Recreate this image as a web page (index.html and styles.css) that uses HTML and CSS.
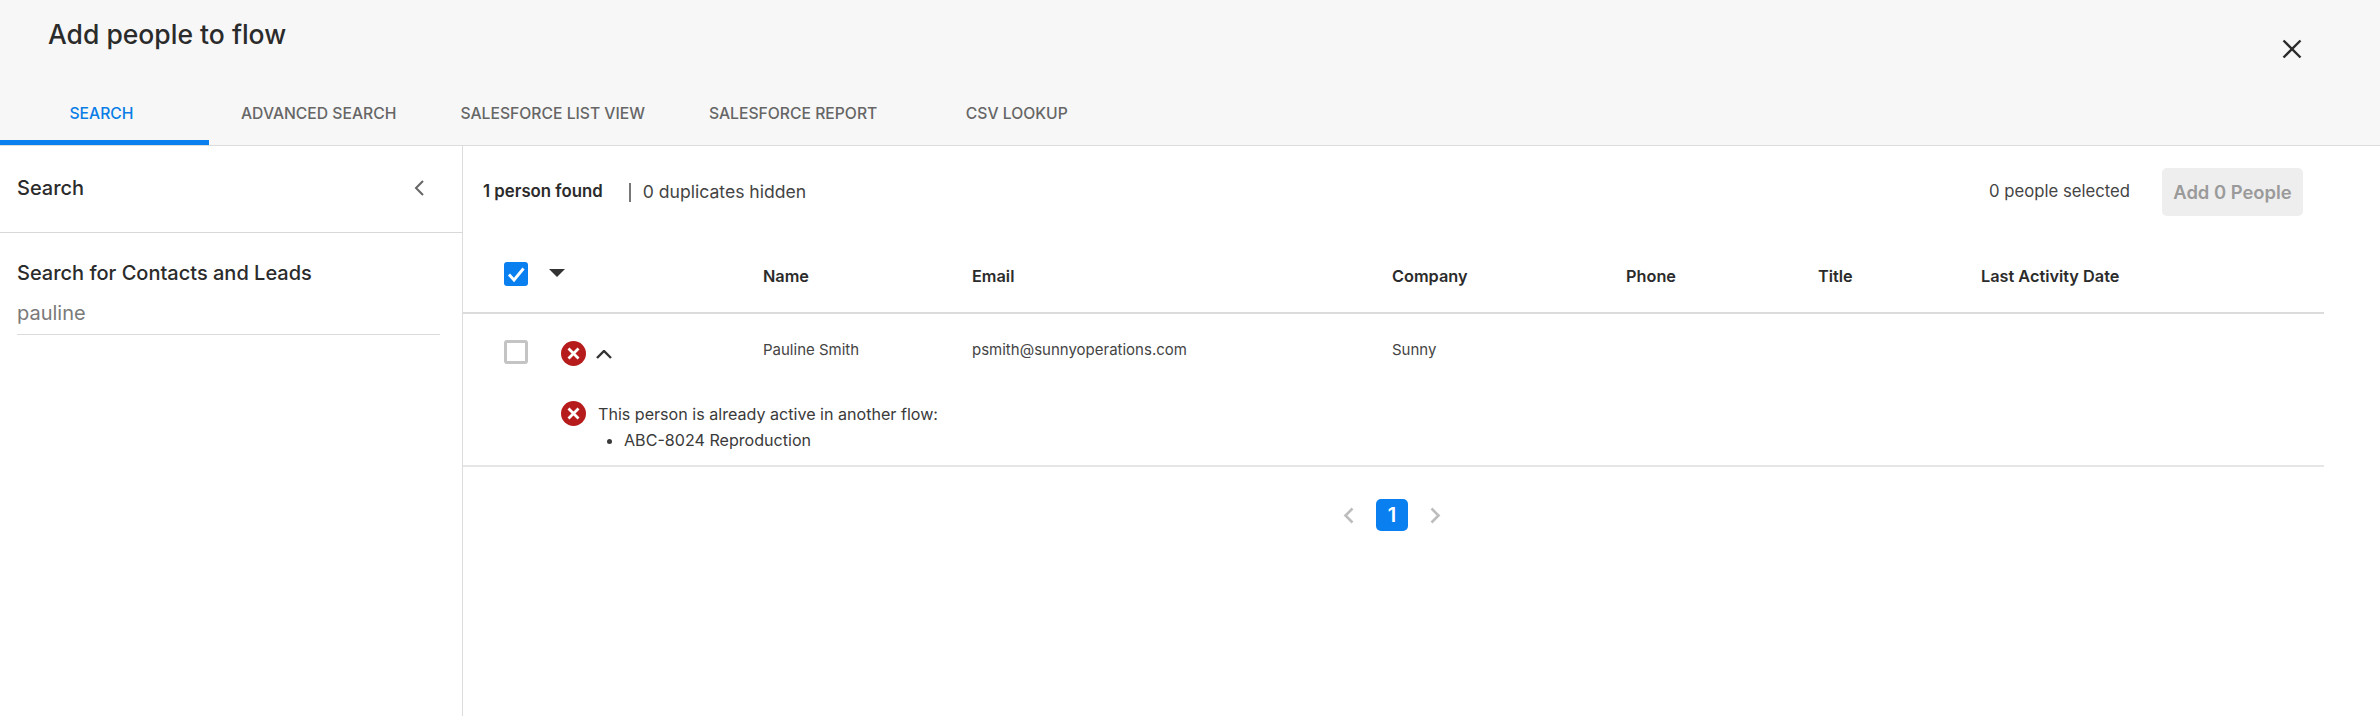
FILE: index.html
```html
<!DOCTYPE html>
<html lang="en">
<head>
<meta charset="utf-8">
<title>Add people to flow</title>
<link rel="stylesheet" href="styles.css">
</head>
<body>
<div class="modal">
  <header class="modal-header">
    <div class="title-row">
      <h1 class="title">Add people to flow</h1>
      <button class="close" aria-label="Close">
        <svg width="20" height="20" viewBox="0 0 20 20"><path d="M1.5 1.5 18.5 18.5M18.5 1.5 1.5 18.5" fill="none" stroke="#2b2b2b" stroke-width="2.4"/></svg>
      </button>
    </div>
    <nav class="tabs">
      <div class="tab active">SEARCH</div>
      <div class="tab">ADVANCED SEARCH</div>
      <div class="tab">SALESFORCE LIST VIEW</div>
      <div class="tab">SALESFORCE REPORT</div>
      <div class="tab">CSV LOOKUP</div>
    </nav>
  </header>
  <div class="body">
    <aside class="sidebar">
      <div class="side-head">
        <span class="side-title">Search</span>
        <svg class="side-collapse" width="12" height="16" viewBox="0 0 12 16"><path d="M10 1 3 8l7 7" fill="none" stroke="#666" stroke-width="2"/></svg>
      </div>
      <div class="side-form">
        <div class="side-label">Search for Contacts and Leads</div>
        <div class="side-input">pauline</div>
      </div>
    </aside>
    <main class="main">
      <div class="toolbar">
        <span class="found">1 person found</span>
        <span class="sep"></span>
        <span class="dups">0 duplicates hidden</span>
        <span class="selected">0 people selected</span>
        <button class="add">Add 0 People</button>
      </div>
      <div class="grid head">
        <div class="select-cell">
          <span class="check on">
            <svg width="24" height="24" viewBox="0 0 24 24"><path d="M5 12.5l5 5.5L19.5 6.5" fill="none" stroke="#fff" stroke-width="2.8"/></svg>
          </span>
          <svg class="caret" width="16" height="8" viewBox="0 0 16 8"><path d="M0 0h16L8 8z" fill="#333"/></svg>
        </div>
        <div>Name</div>
        <div>Email</div>
        <div>Company</div>
        <div>Phone</div>
        <div>Title</div>
        <div>Last Activity Date</div>
      </div>
      <div class="person">
        <div class="grid row">
          <div class="select-cell">
            <span class="check"></span>
            <svg class="err err-row" width="25" height="25" viewBox="0 0 25 25"><circle cx="12.5" cy="12.5" r="12.5" fill="#b71c1c"/><path d="M7.5 7.5l10 10M17.5 7.5l-10 10" stroke="#fff" stroke-width="2.8" fill="none"/></svg>
            <svg class="chev" width="16" height="9" viewBox="0 0 16 9"><path d="M1 8l7-7 7 7" fill="none" stroke="#333" stroke-width="2.4"/></svg>
          </div>
          <div>Pauline Smith</div>
          <div>psmith@sunnyoperations.com</div>
          <div>Sunny</div>
          <div></div>
          <div></div>
          <div></div>
        </div>
        <div class="detail">
          <svg class="err" width="25" height="25" viewBox="0 0 25 25"><circle cx="12.5" cy="12.5" r="12.5" fill="#b71c1c"/><path d="M7.5 7.5l10 10M17.5 7.5l-10 10" stroke="#fff" stroke-width="2.8" fill="none"/></svg>
          <div class="detail-text">
            <div>This person is already active in another flow:</div>
            <ul class="flows"><li>ABC-8024 Reproduction</li></ul>
          </div>
        </div>
      </div>
      <div class="pager">
        <svg width="11" height="17" viewBox="0 0 11 17"><path d="M9.5 1.5 2.5 8.5l7 7" fill="none" stroke="#bdbdbd" stroke-width="2.6"/></svg>
        <span class="page">1</span>
        <svg width="11" height="17" viewBox="0 0 11 17"><path d="M1.5 1.5 8.5 8.5l-7 7" fill="none" stroke="#bdbdbd" stroke-width="2.6"/></svg>
      </div>
    </main>
  </div>
</div>
</body>
</html>
```

FILE: styles.css
```css
* { box-sizing: border-box; }
html, body { margin: 0; height: 100%; }
body {
  font-family: Inter, "Noto Sans", sans-serif;
  color: #2b2b2b;
  background: #fff;
  overflow: hidden;
}
.modal { height: 716px; display: flex; flex-direction: column; }

.modal-header {
  height: 146px;
  background: #f7f7f7;
  border-bottom: 1px solid #dcdcdc;
  display: flex;
  flex-direction: column;
  justify-content: space-between;
}
.title-row {
  display: flex;
  justify-content: space-between;
  align-items: flex-start;
  padding: 19px 78px 0 48px;
}
.title { margin: 0; font-size: 26.5px; line-height: 30px; font-weight: 500; }
.close { border: 0; background: none; padding: 0; margin-top: 20px; height: 20px; display: block; }

.tabs { display: flex; height: 60px; }
.tab {
  min-width: 209px;
  padding: 1px 32px 0;
  display: flex;
  align-items: center;
  justify-content: center;
  font-size: 15.7px;
  font-weight: 500;
  color: #666;
  border-bottom: 5px solid transparent;
  white-space: nowrap;
}
.tab:last-child { min-width: 215px; }
.tab.active { color: #0a7de6; border-bottom-color: #0a7ff0; padding-right: 38px; }

.body { flex: 1; display: flex; min-height: 0; }
.sidebar { width: 463px; border-right: 1px solid #dcdcdc; flex: none; }
.side-head {
  height: 87px;
  border-bottom: 1px solid #d8d8d8;
  padding: 0 37px 2px 17px;
  display: flex;
  align-items: center;
  justify-content: space-between;
}
.side-title { font-size: 20px; font-weight: 500; }
.side-form { padding: 26px 22px 0 17px; }
.side-label { font-size: 20px; line-height: 28px; font-weight: 500; }
.side-input {
  margin-top: 12px;
  font-size: 20px;
  line-height: 28px;
  padding-bottom: 7px;
  color: #7a7a7a;
  border-bottom: 1px solid #dcdcdc;
}

.main { width: 1861px; flex: none; }
.toolbar {
  height: 90px;
  padding: 0 21px 0 20px;
  display: flex;
  align-items: center;
}
.found { font-size: 16.8px; font-weight: 600; }
.sep { width: 2px; height: 19px; background: #777; margin: 2px 12px 0 26px; }
.dups { font-size: 17.6px; color: #444; }
.selected { margin-left: auto; font-size: 16.7px; color: #444; }
.add {
  width: 141px;
  height: 48px;
  margin: 2px 0 0 32px;
  border: 0;
  border-radius: 5px;
  background: #eeeeee;
  color: #9a9a9a;
  font: 600 18.4px Inter, sans-serif;
  padding: 0;
}

.grid {
  display: grid;
  grid-template-columns: 300px 209px 420px 234px 192px 163px 1fr;
  font-size: 16.3px;
}
.head {
  height: 78px;
  border-bottom: 2px solid #dcdcdc;
  font-weight: 600;
  padding-top: 30px;
}
.select-cell { display: flex; align-items: flex-start; padding-left: 41px; position: relative; }
.head .select-cell { margin-top: -4px; }
.check {
  width: 24px;
  height: 24px;
  border-radius: 3px;
  border: 3px solid #c4c4c4;
  flex: none;
  background: #fff;
}
.check.on { border: 0; background: #0a7ff0; }
.check svg { display: block; }
.caret { margin: 7px 0 0 21px; }
.err { flex: none; display: block; }
.err-row { margin: 1px 0 0 33px; }
.chev { margin: 10px 0 0 10px; }

.person { border-bottom: 2px solid #e6e6e6; height: 153px; }
.row { padding-top: 26px; font-size: 15px; font-weight: 400; color: #444; height: 87px; line-height: 20px; }
.detail { display: flex; padding-left: 98px; gap: 12px; font-size: 16.1px; color: #3a3a3a; line-height: 26px; }
.flows { margin: 0; padding-left: 26px; }

.pager {
  display: flex;
  justify-content: center;
  align-items: center;
  gap: 22px;
  margin-top: 32px;
  padding-right: 3px;
}
.page {
  width: 32px;
  height: 32px;
  border-radius: 5px;
  background: #0a7ff0;
  color: #fff;
  font-size: 20px;
  font-weight: 600;
  display: flex;
  align-items: center;
  justify-content: center;
}
```
